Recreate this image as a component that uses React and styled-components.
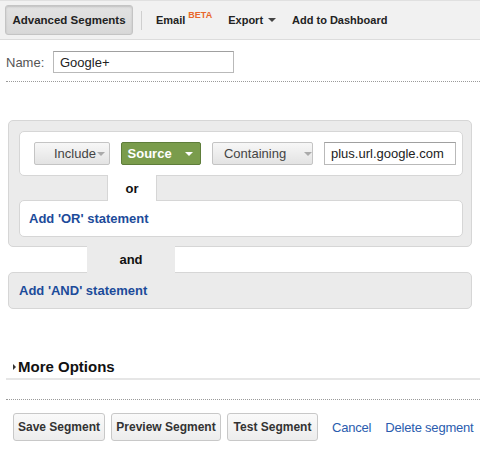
import React from "react";
import styled, { createGlobalStyle } from "styled-components";

const GlobalStyle = createGlobalStyle`
  body {
    margin: 0;
    background: #fff;
    font-family: "Liberation Sans", Arial, sans-serif;
    color: #222;
  }
`;

function App() {
  return (
    <>
      <GlobalStyle />
      <Toolbar>
        <PressedButton>Advanced Segments</PressedButton>
        <Divider />
        <ToolItem>
          Email<Beta>BETA</Beta>
        </ToolItem>
        <ToolItem>
          Export <Caret />
        </ToolItem>
        <ToolItem>Add to Dashboard</ToolItem>
      </Toolbar>

      <NameRow>
        <label>Name:</label>
        <TextInput defaultValue="Google+" $width={181} />
      </NameRow>
      <Dotted />

      <GroupBox>
        <WhiteRow>
          <SelectButton $width={76} $padLeft={19}>
            Include<SmallCaret />
          </SelectButton>
          <GreenButton>
            Source <Caret $color="#fff" />
          </GreenButton>
          <SelectButton $width={101} $padLeft={11}>
            Containing<SmallCaret $gap={18} />
          </SelectButton>
          <TextInput defaultValue="plus.url.google.com" $width={132} $height={23} />
        </WhiteRow>
        <OrTab>or</OrTab>
        <WhiteRow $short>
          <BlueLink>Add 'OR' statement</BlueLink>
        </WhiteRow>
      </GroupBox>
      <AndTab>and</AndTab>
      <AndBox>
        <BlueLink>Add 'AND' statement</BlueLink>
      </AndBox>

      <MoreOptions>
        <Triangle />
        More Options
      </MoreOptions>
      <Dotted $top={19} />

      <Actions>
        <ActionButton $width={92}>Save Segment</ActionButton>
        <ActionButton $width={110}>Preview Segment</ActionButton>
        <ActionButton $width={91}>Test Segment</ActionButton>
        <PlainLink $left={8}>Cancel</PlainLink>
        <PlainLink $left={8}>Delete segment</PlainLink>
      </Actions>
    </>
  );
}

const Toolbar = styled.div`
  display: flex;
  align-items: center;
  height: 38px;
  padding: 0 5px;
  background: #f1f1f1;
  border-top: 1px solid #e0e0e0;
  border-bottom: 1px solid #dcdcdc;
  font-size: 11px;
  font-weight: bold;
  color: #222;
`;

const PressedButton = styled.div`
  display: flex;
  align-items: center;
  justify-content: center;
  box-sizing: border-box;
  width: 128px;
  height: 30px;
  border: 1px solid #c4c4c4;
  border-radius: 3px;
  background: linear-gradient(#e2e2e2, #d8d8d8);
  box-shadow: inset 0 1px 2px rgba(0, 0, 0, 0.15);
  font-size: 11.5px;
  color: #222;
`;

const Divider = styled.div`
  width: 1px;
  height: 19px;
  background: #cfcfcf;
  margin: 0 14px 0 8px;
`;

const ToolItem = styled.div`
  display: flex;
  align-items: center;
  white-space: nowrap;
  margin-right: 16px;
`;

const Beta = styled.span`
  color: #e8672a;
  font-size: 9px;
  align-self: flex-start;
  margin: -4px 0 0 3px;
`;

const Caret = styled.span`
  display: inline-block;
  width: 0;
  height: 0;
  margin-left: 5px;
  border-left: 4px solid transparent;
  border-right: 4px solid transparent;
  border-top: 4px solid ${(p) => p.$color || "#444"};
`;

const SmallCaret = styled.span`
  display: inline-block;
  width: 0;
  height: 0;
  margin-left: ${(p) => p.$gap || 1}px;
  border-left: 4px solid transparent;
  border-right: 4px solid transparent;
  border-top: 4px solid #aaa;
`;

const NameRow = styled.div`
  display: flex;
  align-items: center;
  margin: 11px 0 0 6px;
  font-size: 13px;
  color: #555;
  label {
    width: 47px;
  }
`;

const TextInput = styled.input`
  box-sizing: border-box;
  width: ${(p) => p.$width}px;
  height: ${(p) => p.$height || 22}px;
  padding: 0 6px;
  border: 1px solid #b9b9b9;
  border-top-color: #a0a0a0;
  font-family: "Liberation Sans", Arial, sans-serif;
  font-size: 13px;
  color: #222;
  outline: none;
`;

const Dotted = styled.div`
  margin: ${(p) => p.$top || 8}px 0 0 6px;
  border-top: 1px dotted #9a9a9a;
`;

const GroupBox = styled.div`
  margin: 38px 8px 0 8px;
  padding: 10px 8px 9px 10px;
  background: #ebebeb;
  border: 1px solid #d6d6d6;
  border-radius: 5px;
`;

const WhiteRow = styled.div`
  display: flex;
  align-items: center;
  gap: 10px;
  box-sizing: border-box;
  height: ${(p) => (p.$short ? 37 : 45)}px;
  padding: ${(p) => (p.$short ? "0 9px" : "0 6px 0 14px")};
  background: #fff;
  border: 1px solid #d6d6d6;
  border-radius: 5px;
  & > * + * {
    margin-left: 1px;
  }
`;

const OrTab = styled.div`
  position: relative;
  z-index: 1;
  box-sizing: border-box;
  width: 50px;
  height: 26px;
  margin: -1px 0 -1px 88px;
  background: #fff;
  border-left: 1px solid #d6d6d6;
  border-right: 1px solid #d6d6d6;
  display: flex;
  align-items: center;
  justify-content: center;
  font-size: 13px;
  font-weight: bold;
  color: #111;
`;

const SelectButton = styled.div`
  display: flex;
  align-items: center;
  box-sizing: border-box;
  width: ${(p) => p.$width}px;
  height: 23px;
  padding-left: ${(p) => p.$padLeft}px;
  border: 1px solid #c4c4c4;
  border-radius: 2px;
  background: linear-gradient(#f7f7f7, #e3e3e3);
  font-size: 13px;
  color: #444;
`;

const GreenButton = styled.div`
  display: flex;
  align-items: center;
  box-sizing: border-box;
  width: 81px;
  height: 23px;
  padding-left: 6px;
  border: 1px solid #5e7d3a;
  border-radius: 2px;
  background: #7a9c4c;
  color: #fff;
  font-size: 13px;
  font-weight: bold;
  ${Caret} {
    margin-left: 13px;
  }
`;

const BlueLink = styled.span`
  font-size: 13px;
  font-weight: bold;
  color: #1c4b9a;
`;

const AndTab = styled.div`
  position: relative;
  z-index: 1;
  width: 88px;
  height: 27px;
  margin: -1px 0 -1px 87px;
  background: #ebebeb;
  display: flex;
  align-items: center;
  justify-content: center;
  font-size: 13px;
  font-weight: bold;
  color: #111;
`;

const AndBox = styled.div`
  display: flex;
  align-items: center;
  box-sizing: border-box;
  height: 37px;
  margin: 0 8px;
  padding-left: 10px;
  background: #ebebeb;
  border: 1px solid #d6d6d6;
  border-radius: 5px;
`;

const MoreOptions = styled.div`
  display: flex;
  align-items: center;
  margin: 49px 0 0 6px;
  padding: 0 0 3px 7px;
  border-bottom: 2px solid #e6e6e6;
  font-size: 15px;
  font-weight: bold;
  color: #111;
`;

const Triangle = styled.span`
  width: 0;
  height: 0;
  margin-right: 2px;
  border-top: 3px solid transparent;
  border-bottom: 3px solid transparent;
  border-left: 3px solid #333;
`;

const Actions = styled.div`
  display: flex;
  align-items: center;
  gap: 6px;
  margin: 13px 0 0 13px;
  white-space: nowrap;
`;

const ActionButton = styled.div`
  display: flex;
  flex-shrink: 0;
  align-items: center;
  justify-content: center;
  box-sizing: border-box;
  width: ${(p) => p.$width}px;
  height: 28px;
  border: 1px solid #c8c8c8;
  border-radius: 3px;
  background: linear-gradient(#fafafa, #ededed);
  font-size: 12px;
  font-weight: bold;
  color: #333;
`;

const PlainLink = styled.span`
  flex-shrink: 0;
  margin-left: ${(p) => p.$left}px;
  font-size: 13px;
  letter-spacing: -0.2px;
  color: #2a5cae;
`;

export default App;
